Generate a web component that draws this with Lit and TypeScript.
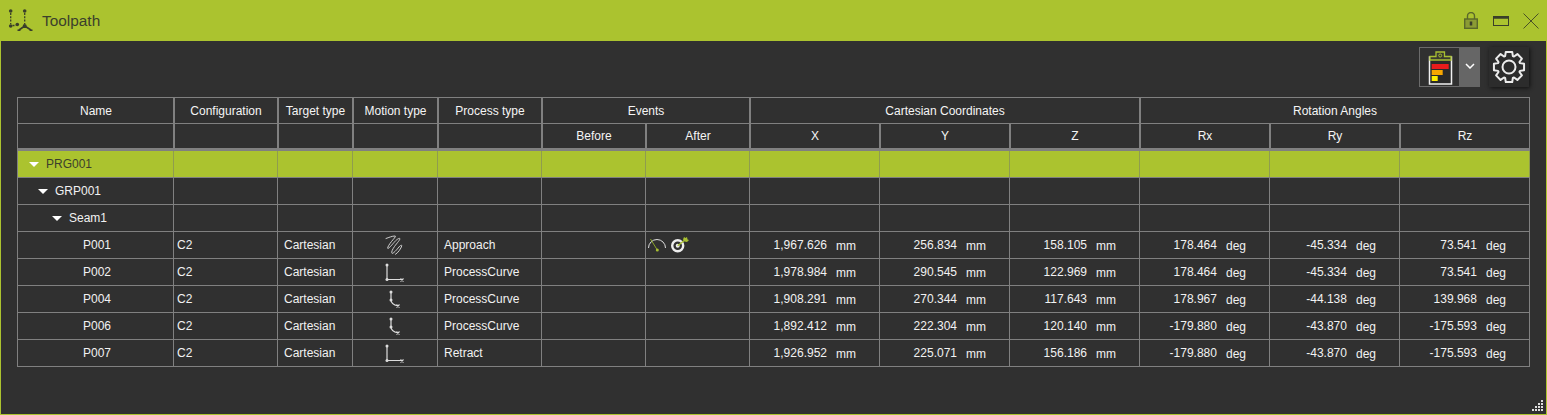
import { LitElement, html, css, svg } from "lit";
import { customElement } from "lit/decorators.js";

const cols = [156, 104, 75, 85, 104, 104, 104, 130, 130, 130, 130, 130, 130];

const pathLine = svg`<path d="M3 3V17.500H18" fill="none" stroke="#ddd" stroke-width="1.200"/><circle cx="3" cy="3" r="1.500" fill="#ddd"/><circle cx="3" cy="17.500" r="1.500" fill="#ddd"/><path d="M16.500 16.500l3 3M19.500 16.500l-3 3" stroke="#ddd" stroke-width="1.100"/>`;
const pathCurve = svg`<path d="M7 3V11C7 14 10 16 14 17" fill="none" stroke="#ddd" stroke-width="1.200"/><circle cx="7" cy="3" r="1.500" fill="#ddd"/><circle cx="7" cy="11" r="1.500" fill="#ddd"/><path d="M12.500 15.500l3 3M15.500 15.500l-3 3" stroke="#ddd" stroke-width="1.100"/>`;
const pathZig = svg`<path d="M2 3.500C5 2.500 8 1 11 1C12.500 1 10 3.500 7.500 6.500C5.500 9 3.500 12 3.700 13.300C4 14.300 7 11 10 7.500C12 5 15 2.800 15.800 3.500C16.500 4.500 13 8 10.500 11.500C8.500 14.300 7 17.500 8 18.300C9 19 13 14.500 15 12C16.300 10.300 18 9.500 17.700 11C17.300 13 14 18 11.500 19.300" fill="none" stroke="#cfcfcf" stroke-width="1" stroke-linejoin="round" stroke-linecap="round"/>`;

function gearPath(): string {
  const cx = 17, cy = 17, root = 11.6, tip = 15.4;
  const pts: string[] = [];
  for (let i = 0; i < 8; i++) {
    const a = -Math.PI / 2 + (i * Math.PI) / 4;
    const seq: [number, number][] = [[root, -0.34], [tip, -0.21], [tip, 0.21], [root, 0.34]];
    for (const [r, d] of seq) {
      pts.push(`${(cx + r * Math.cos(a + d)).toFixed(2)} ${(cy + r * Math.sin(a + d)).toFixed(2)}`);
    }
  }
  return "M" + pts.join("L") + "Z";
}

const rows = [
  ["P001","C2","Cartesian","zig","Approach",true,"1,967.626","256.834","158.105","178.464","-45.334","73.541"],
  ["P002","C2","Cartesian","line","ProcessCurve",false,"1,978.984","290.545","122.969","178.464","-45.334","73.541"],
  ["P004","C2","Cartesian","curve","ProcessCurve",false,"1,908.291","270.344","117.643","178.967","-44.138","139.968"],
  ["P006","C2","Cartesian","curve","ProcessCurve",false,"1,892.412","222.304","120.140","-179.880","-43.870","-175.593"],
  ["P007","C2","Cartesian","line","Retract",false,"1,926.952","225.071","156.186","-179.880","-43.870","-175.593"],
] as const;

@customElement("app-root")
export class AppRoot extends LitElement {
  static styles = css`
    :host { display: block; width: 1547px; height: 415px; box-sizing: border-box; font-family: "Liberation Sans", Arial, sans-serif; background: #303030; color: #f2f2f2; overflow: hidden; position: relative; border: 1px solid #abc32f; border-top: 0; }
    .title { height: 41px; margin: 0 -1px; background: #abc32f; display: flex; align-items: center; padding: 0 8px; gap: 8px; color: #3b3f2c; font-size: 15.4px; }
    .title .sp { flex: 1; }
    .winbtns { display: flex; align-items: center; gap: 14px; }
    .lock { margin-right: 1px; }
    .tools { height: 56px; display: flex; justify-content: flex-end; align-items: flex-start; gap: 9px; padding: 6px 17px 0 0; box-sizing: border-box; }
    .split { display: flex; width: 61px; height: 40px; box-sizing: border-box; border: 1px solid #6b6b6b; }
    .split .main { width: 39px; display: flex; align-items: center; justify-content: center; }
    .split .arrow { flex: 1; background: #666; display: flex; align-items: center; justify-content: center; margin: -1px -1px -1px 0; padding-bottom: 2px; box-sizing: border-box; }
    .gear { width: 40px; height: 40px; background: #2c2c2c; box-shadow: 1px 1px 4px #111; display: flex; align-items: center; justify-content: center; }
    .table { margin-left: 16px; width: 1513px; box-sizing: border-box; border-top: 1px solid #808080; border-left: 1px solid #808080; font-size: 12px; }
    .row { display: flex; height: 27px; box-sizing: border-box; border-bottom: 1px solid #808080; }
    .hrow { height: 26px; }
    .hrow.h2 { height: 24px; border-bottom: 0; }
    .sep { height: 3px; background: #808080; }
    .c { box-sizing: border-box; border-right: 1px solid #808080; display: flex; align-items: center; overflow: hidden; white-space: nowrap; flex: none; }
    .h { justify-content: center; color: #f5f5f5; padding-left: 1px; overflow: visible; box-shadow: 1px 0 0 #808080; }
    .h:last-child { box-shadow: none; }
    .l3 { padding-left: 3px; }
    .l6 { padding-left: 6px; }
    .ctr { justify-content: center; }
    .hl { background: #abc32f; color: #3b3f2c; }
    .hl .c { border-right-color: #8f9c4e; }
    .tree { gap: 7px; }
    .tri { width: 0; height: 0; border-left: 5px solid transparent; border-right: 5px solid transparent; border-top: 5px solid #fff; }
    .t0 { padding-left: 11px; }
    .t1 { padding-left: 20px; }
    .t2 { padding-left: 34px; }
    .t3 { padding-left: 65px; }
    .val { display: flex; justify-content: flex-end; align-items: center; width: 100%; padding-right: 23px; box-sizing: border-box; gap: 9px; }
    .unit { padding-top: 2px; }
    .ev { padding-left: 1px; gap: 4px; }
    .grip { position: absolute; right: 2px; bottom: 2px; }
  `;

  private cell(i: number, span = 1) {
    let w = 0;
    for (let k = i; k < i + span; k++) w += cols[k];
    return `width:${w}px`;
  }

  private empties(from: number, to = cols.length) {
    const out = [];
    for (let i = from; i < to; i++) out.push(html`<div class="c" style=${this.cell(i)}></div>`);
    return out;
  }

  private hempties(from: number, to: number) {
    const out = [];
    for (let i = from; i < to; i++) out.push(html`<div class="c h" style=${this.cell(i)}></div>`);
    return out;
  }

  private icon(k: string) {
    const p = k === "zig" ? pathZig : k === "line" ? pathLine : pathCurve;
    return html`<svg width="22" height="20" viewBox="0 0 22 20">${p}</svg>`;
  }

  render() {
    return html`
      <div class="title">
        <svg width="26" height="25" viewBox="0 0 26 25" fill="#3a3f2a">
          <circle cx="2.700" cy="3" r="1.800"/><circle cx="16.700" cy="3" r="1.800"/><circle cx="2.700" cy="18" r="1.800"/><circle cx="9.300" cy="16.500" r="1.800"/><circle cx="16.700" cy="18" r="2"/>
          <path d="M2.700 5V16M16.700 5V16M4.500 17.500H8" stroke="#3a3f2a" stroke-width="1.300" stroke-dasharray="2 1.300" fill="none"/>
          <path d="M16.700 18L11 22M16.700 18L23 22M9.500 22.300H12.500M21.500 22.300H24.500" stroke="#3a3f2a" stroke-width="1.600" fill="none"/>
        </svg>
        <span>Toolpath</span>
        <span class="sp"></span>
        <div class="winbtns">
          <svg class="lock" width="14" height="17" viewBox="0 0 14 17" fill="none" stroke="#5a682a" stroke-width="1.400"><path d="M3.500 7V4a3.500 3.500 0 0 1 7 0V7"/><rect x=".7" y="7" width="12.600" height="9.300" fill="#8b9c34"/><path d="M7 9.500v4" stroke="#3a3f2a" stroke-width="2.500"/></svg>
          <svg width="16" height="10" viewBox="0 0 16 10" fill="none" stroke="#3a3f2a" stroke-width="1"><rect x=".5" y=".5" width="15" height="9"/><path d="M0 1.500h16" stroke-width="2.500"/></svg>
          <svg width="16" height="16" viewBox="0 0 16 16" stroke="#4a5226" stroke-width="1"><path d="M.5.5l15 15M15.500.5l-15 15"/></svg>
        </div>
      </div>
      <div class="tools">
        <div class="split">
          <div class="main">
            <svg width="26" height="36" viewBox="0 0 26 36">
              <rect x="2.500" y="8" width="22" height="27" fill="#2a2a2a" stroke="#f0f0f0" stroke-width="1.500"/>
              <path d="M3 11V7.500H9V3H17.500V7.500H24V11Z" fill="#3a3a30" stroke="#a8bf32" stroke-width="1.300"/>
              <circle cx="13.200" cy="6.500" r="1.500" fill="none" stroke="#a8bf32"/>
              <rect x="4.700" y="15" width="17" height="5" fill="#e81c1c"/><rect x="4.700" y="21" width="11" height="5" fill="#f7a600"/><rect x="4.700" y="27" width="6" height="5" fill="#ffee00"/>
            </svg>
          </div>
          <div class="arrow"><svg width="10" height="6" viewBox="0 0 10 6" fill="none" stroke="#fff" stroke-width="1.500"><path d="M1 1l4 4 4-4"/></svg></div>
        </div>
        <div class="gear">
          <svg width="34" height="34" viewBox="0 0 34 34" fill="none" stroke="#ececec" stroke-width="2" stroke-linejoin="round">
            <path d=${gearPath()}/>
            <circle cx="17" cy="17" r="6.500"/>
          </svg>
        </div>
      </div>
      <div class="table">
        <div class="row hrow">
          ${["Name","Configuration","Target type","Motion type","Process type"].map((t,i)=>html`<div class="c h" style=${this.cell(i)}>${t}</div>`)}
          <div class="c h" style=${this.cell(5,2)}>Events</div>
          <div class="c h" style=${this.cell(7,3)}>Cartesian Coordinates</div>
          <div class="c h" style=${this.cell(10,3)}>Rotation Angles</div>
        </div>
        <div class="row hrow h2">
          ${this.hempties(0,5)}
          ${["Before","After","X","Y","Z","Rx","Ry","Rz"].map((t,i)=>html`<div class="c h" style=${this.cell(i+5)}>${t}</div>`)}
        </div>
        <div class="sep"></div>
        <div class="row hl"><div class="c tree t0" style=${this.cell(0)}><span class="tri"></span>PRG001</div>${this.empties(1)}</div>
        <div class="row"><div class="c tree t1" style=${this.cell(0)}><span class="tri"></span>GRP001</div>${this.empties(1)}</div>
        <div class="row"><div class="c tree t2" style=${this.cell(0)}><span class="tri"></span>Seam1</div>${this.empties(1)}</div>
        ${rows.map(r=>html`<div class="row">
          <div class="c t3" style=${this.cell(0)}>${r[0]}</div>
          <div class="c l3" style=${this.cell(1)}>${r[1]}</div>
          <div class="c l6" style=${this.cell(2)}>${r[2]}</div>
          <div class="c ctr" style=${this.cell(3)}>${this.icon(r[3])}</div>
          <div class="c l6" style=${this.cell(4)}>${r[4]}</div>
          <div class="c" style=${this.cell(5)}></div>
          <div class="c ev" style=${this.cell(6)}>${r[5]?html`
            <svg width="20" height="16" viewBox="0 0 20 16" fill="none"><path d="M1.500 11A8.500 8.500 0 0 1 18.500 11" stroke="#ddd" stroke-width="1"/><path d="M3.500 2L10.300 13" stroke="#8aa52a" stroke-width="1"/><circle cx="10.300" cy="13" r="1.500" fill="#a8bf32"/></svg>
            <svg width="20" height="16" viewBox="0 0 20 16" fill="none"><circle cx="6.700" cy="8.700" r="5.500" stroke="#eee" stroke-width="2.400"/><circle cx="6.700" cy="8.700" r="2" fill="#eee"/><path d="M6.700 8.700L14 3" stroke="#a8bf32" stroke-width="1.300"/><path d="M12 2.500l1-2.500 1.500 1 1.500-1 .5 2.500 1.500.5-2 2-2.500-.5z" fill="#a8bf32"/></svg>`:""}</div>
          ${[6,7,8].map((k,i)=>html`<div class="c" style=${this.cell(i+7)}><span class="val">${r[k]}<span class="unit">mm</span></span></div>`)}
          ${[9,10,11].map((k,i)=>html`<div class="c" style=${this.cell(i+10)}><span class="val">${r[k]}<span class="unit">deg</span></span></div>`)}
        </div>`)}
      </div>
      <svg class="grip" width="12" height="12" viewBox="0 0 12 12" fill="#ddd">
        ${[[9,0],[9,3],[6,3],[9,6],[6,6],[3,6],[9,9],[6,9],[3,9],[0,9]].map(([x,y])=>svg`<rect x=${x} y=${y} width="2" height="2"/>`)}
      </svg>
    `;
  }
}
